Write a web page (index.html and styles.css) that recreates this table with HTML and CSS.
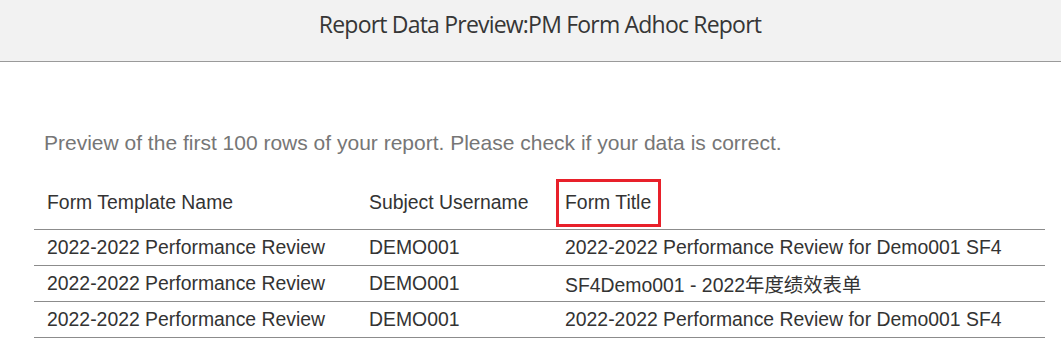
FILE: index.html
```html
<!DOCTYPE html>
<html lang="en">
<head>
  <meta charset="UTF-8">
  <title>Report Data Preview</title>
  <link rel="stylesheet" href="styles.css">
</head>
<body>

  <!-- Заголовок диалога -->
  <div class="dialog-header">
    <h1 class="dialog-title">Report Data Preview:PM Form Adhoc Report</h1>
  </div>

  <div class="dialog-body">
    <p class="hint">Preview of the first 100 rows of your report. Please check if your data is correct.</p>

    <table class="preview-table">
      <colgroup>
        <col class="col-template">
        <col class="col-subject">
        <col class="col-title">
      </colgroup>
      <thead>
        <tr>
          <th>Form Template Name</th>
          <th>Subject Username</th>
          <th><span class="marked">Form Title</span></th>
        </tr>
      </thead>
      <tbody>
        <tr>
          <td>2022-2022 Performance Review</td>
          <td>DEMO001</td>
          <td>2022-2022 Performance Review for Demo001 SF4</td>
        </tr>
        <tr>
          <td>2022-2022 Performance Review</td>
          <td>DEMO001</td>
          <td>SF4Demo001 - 2022年度绩效表单</td>
        </tr>
        <tr>
          <td>2022-2022 Performance Review</td>
          <td>DEMO001</td>
          <td>2022-2022 Performance Review for Demo001 SF4</td>
        </tr>
      </tbody>
    </table>
  </div>

</body>
</html>
```

FILE: styles.css
```css
:root {
  --text-main: #333333;
  --text-muted: #767676;
  --line: #8c8c8c;
  --header-bg: #f2f2f2;
  --mark: #e8202a;
}

* { box-sizing: border-box; }

body {
  margin: 0;
  background: #ffffff;
  color: var(--text-main);
  font-family: "Liberation Sans", Arial, "Noto Sans CJK SC", sans-serif;
}

/* ШАПКА */

.dialog-header {
  height: 62px;
  background: var(--header-bg);
  border-bottom: 1px solid #9a9a9a;
  display: flex;
  align-items: center;
  justify-content: center;
  padding: 0 0 14px 19px;
}

.dialog-title {
  margin: 0;
  font-family: "Open Sans", sans-serif;
  font-weight: 400;
  font-size: 23px;
  letter-spacing: -0.8px;
  color: #363636;
}

/* ТЕЛО */

.dialog-body {
  padding: 0 16px 0 34px;
}

.hint {
  margin: 69px 0 0 10px;
  font-size: 21px;
  line-height: 24px;
  color: var(--text-muted);
}

.preview-table {
  width: 1011px;
  margin-top: 21px;
  border-collapse: collapse;
  table-layout: fixed;
  font-size: 19.4px;
}

.col-template { width: 322px; }
.col-subject { width: 196px; }

.preview-table th,
.preview-table td {
  text-align: left;
  font-weight: 400;
  padding: 1px 0 0 13px;
  white-space: nowrap;
  border-bottom: 1px solid var(--line);
}

.preview-table th {
  height: 53px;
  vertical-align: middle;
}

.preview-table td {
  height: 36px;
  vertical-align: middle;
}

.marked {
  position: relative;
}

.marked::after {
  content: "";
  position: absolute;
  left: -9px;
  right: -10px;
  top: -12px;
  bottom: -14px;
  border: 3px solid var(--mark);
}
```
